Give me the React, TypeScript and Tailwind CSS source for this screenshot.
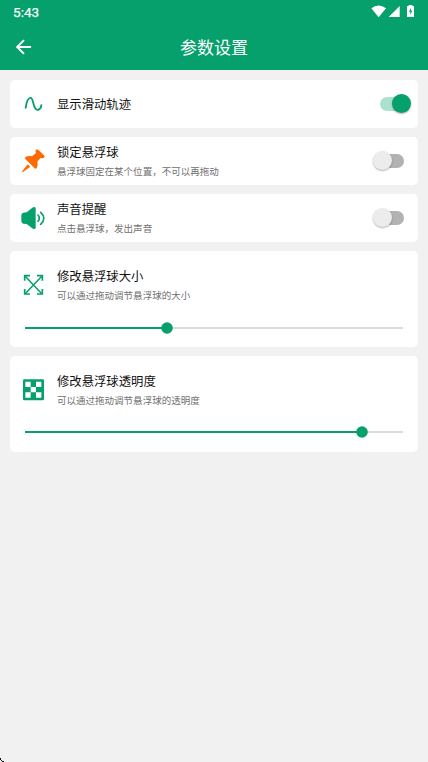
import type { ReactNode } from "react";

const GREEN = "#05a06c";

function StatusBar() {
  return (
    <div className="flex h-[24px] items-center justify-between pl-[13px] pr-[13px]">
      <span className="font-['Roboto',sans-serif] text-[13.6px] leading-[24px] [-webkit-text-stroke:0.25px_white]">5:43</span>
      <svg viewBox="90 9 138 48" className="-mr-[1px] -mt-[2px] h-[16px] w-[46px]" fill="#fff">
        <path d="M94 25 Q116 8 138 25 L116 52 Z" />
        <path d="M179 18 V51 H146 Z" />
        <path d="M206 15 H217 V18 H222 V51 H201 V18 H206 Z" />
        <path d="M213 23 L207 35 H211 V45 L217 32 H213 Z" fill={GREEN} />
      </svg>
    </div>
  );
}

function Switch({ on = false }: { on?: boolean }) {
  return (
    <div className={`relative h-[13.5px] w-[24px] shrink-0 rounded-full ${on ? "bg-[#abe1ce]" : "bg-[#b2b2b2]"}`}>
      <div
        className={`absolute -top-[2.8px] size-[19px] rounded-full shadow-[0_1px_2px_rgba(0,0,0,0.3)] ${
          on ? "left-[12px] bg-[#05a06c]" : "-left-[7px] bg-[#ececec]"
        }`}
      />
    </div>
  );
}

function Slider({ value }: { value: number }) {
  return (
    <div className="ml-[15.5px] mr-[15px] flex h-[18.6px] items-center">
      <div className="relative h-[2px] w-full bg-[#dcdcdc]">
        <div className="h-full bg-[#05a06c]" style={{ width: `${value}%` }} />
        <svg viewBox="0 0 12 12" className="absolute -top-[5px] -ml-[6px] size-[12px]" style={{ left: `${value}%` }}>
          <circle cx="6" cy="6" r="5.8" fill={GREEN} />
        </svg>
      </div>
    </div>
  );
}

function Row({ icon, title, note, control, tall }: { icon: ReactNode; title: string; note?: string; control?: ReactNode; tall?: boolean }) {
  return (
    <div className={`flex items-center pl-[12.5px] pr-[14.6px] ${tall ? "h-[67px]" : "h-full"}`}>
      {icon}
      <div className={`ml-[11px] flex-1 whitespace-nowrap ${note ? (tall ? "pt-[1.4px]" : "pt-[2px]") : ""}`}>
        <div className="text-[12.35px] leading-[20px] text-[#111]">{title}</div>
        {note && <div className="text-[9.52px] leading-[19.6px] text-[#707070]">{note}</div>}
      </div>
      {control}
    </div>
  );
}

function Card({ children, tall }: { children: ReactNode; tall?: boolean }) {
  return <section className={`shrink-0 rounded-[5px] bg-white ${tall ? "h-[95.4px]" : "h-[47.6px]"}`}>{children}</section>;
}

const iconClass = "size-[24px] shrink-0";

const WaveIcon = () => (
  <svg viewBox="66 53.4 72 72" className={iconClass} fill="none" stroke={GREEN} strokeWidth="5.6" strokeLinecap="round">
    <path d="M77 101 C80 80 85 71 92 71 C101 71 99 107 112 107 C119 107 123 102 124 93" />
  </svg>
);

const PinIcon = () => (
  <svg viewBox="66 45 72 72" className={iconClass} fill="#ff6a00">
    <path d="M110 46 Q114 46 122 54 L132 64 Q136 68 132 71 Q128 74 122 71 L112 83 Q115 93 110 102 Q107 106 103 102 L76 75 Q73 71 77 69 Q86 64 96 67 L108 57 Q104 50 110 46 Z" />
    <path d="M83 91 L91 98 L69 114 Q65 115 67 111 Z" />
  </svg>
);

const SpeakerIcon = () => (
  <svg viewBox="66 48 72 72" className={`${iconClass} overflow-visible`}>
    <path d="M70 68 L80 67 L97 53 Q102 49 107 53 V115 Q102 120 97 115 L80 102 L70 101 Q64 100 64 93 V76 Q64 69 70 68 Z" fill={GREEN} />
    <g fill="none" stroke={GREEN} strokeWidth="5" strokeLinecap="round">
      <path d="M114 75 Q122 84 114 94" />
      <path d="M122 67 Q141 84 122 103" />
    </g>
  </svg>
);

const ExpandIcon = () => (
  <svg viewBox="66 75 72 72" className={iconClass} fill="none" stroke={GREEN} strokeWidth="5">
    <path d="M75 84 L126 138 M126 84 L75 138" strokeWidth="4.5" />
    <path d="M74 98 V83 H90 M111 83 H127 V98 M127 123 V138 H111 M90 138 H74 V123" />
  </svg>
);

const CheckerIcon = () => (
  <svg viewBox="66 77 72 72" className={iconClass}>
    <rect x="69" y="81" width="63" height="63" rx="4" fill={GREEN} />
    <path d="M76 88h16v16h-16z M108 88h16v16h-16z M92 104h16v16h-16z M76 120h16v16h-16z M108 120h16v16h-16z" fill="#fff" />
  </svg>
);

export default function App() {
  return (
    <div className="relative flex h-[762px] w-[428px] flex-col overflow-hidden bg-[#f1f1f1] font-['Noto_Sans_CJK_SC',sans-serif]">
      <header className="h-[70.4px] shrink-0 bg-[#05a06c] text-white">
        <StatusBar />
        <div className="grid h-[45px] grid-cols-[60px_1fr_60px] items-center">
          <svg viewBox="0 0 24 24" className="ml-[14px] size-[20px]" fill="none" stroke="#fff" strokeWidth="2.4">
            <path d="M20.5 12 H4 M12 3.8 L3.8 12 L12 20.2" />
          </svg>
          <h1 className="text-center text-[17px] leading-[24px]">参数设置</h1>
        </div>
      </header>
      <main className="flex flex-col gap-[9.5px] pl-[9.5px] pr-[9.6px] pt-[9.6px]">
        <Card>
          <Row icon={<WaveIcon />} title="显示滑动轨迹" control={<Switch on />} />
        </Card>
        <Card>
          <Row icon={<PinIcon />} title="锁定悬浮球" note="悬浮球固定在某个位置，不可以再拖动" control={<Switch />} />
        </Card>
        <Card>
          <Row icon={<SpeakerIcon />} title="声音提醒" note="点击悬浮球，发出声音" control={<Switch />} />
        </Card>
        <Card tall>
          <Row tall icon={<ExpandIcon />} title="修改悬浮球大小" note="可以通过拖动调节悬浮球的大小" />
          <Slider value={37.6} />
        </Card>
        <Card tall>
          <Row tall icon={<CheckerIcon />} title="修改悬浮球透明度" note="可以通过拖动调节悬浮球的透明度" />
          <Slider value={89} />
        </Card>
      </main>
      <svg viewBox="0 0 4 4" className="absolute bottom-0 left-0 size-[4px]" fill="#111">
        <path d="M0 0h1v1H0z M1 2h1v1H1z M2 3h2v1H2z M0 1h1v1H0z" />
      </svg>
    </div>
  );
}
